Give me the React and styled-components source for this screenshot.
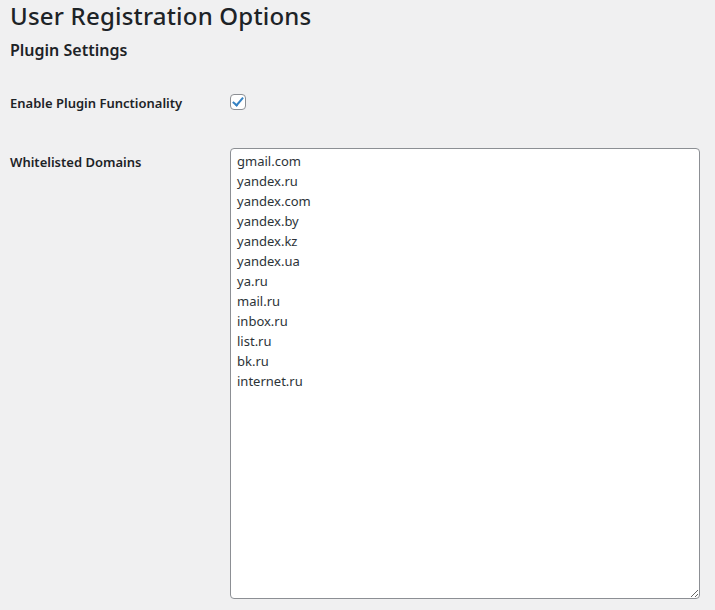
import React from "react";
import styled, { createGlobalStyle } from "styled-components";

const domains = [
  "gmail.com",
  "yandex.ru",
  "yandex.com",
  "yandex.by",
  "yandex.kz",
  "yandex.ua",
  "ya.ru",
  "mail.ru",
  "inbox.ru",
  "list.ru",
  "bk.ru",
  "internet.ru",
];

const App = () => {
  return (
    <>
      <GlobalStyle />
      <Wrap>
        <Title>User Registration Options</Title>
        <Subtitle>Plugin Settings</Subtitle>
        <Form>
          <Row>
            <Label htmlFor="enable">Enable Plugin Functionality</Label>
            <Field>
              <Checkbox id="enable" type="checkbox" defaultChecked />
            </Field>
          </Row>
          <Row>
            <Label htmlFor="domains" $offset={4}>
              Whitelisted Domains
            </Label>
            <Field>
              <Domains id="domains" defaultValue={domains.join("\n")} />
            </Field>
          </Row>
        </Form>
      </Wrap>
    </>
  );
};

export default App;

//styled-components

const GlobalStyle = createGlobalStyle`
  html, body {
    margin: 0;
    background: #f0f0f1;
    color: #1d2327;
    font-family: "Noto Sans", "Open Sans", sans-serif;
    font-size: 13px;
  }
  body {
    overflow: hidden;
  }
`;

const Wrap = styled.div`
  padding: 0 15px 0 10px;
`;

const Title = styled.h1`
  margin: 0;
  font-size: 24px;
  font-weight: 500;
  letter-spacing: 0.2px;
  line-height: 32px;
`;

const Subtitle = styled.h2`
  margin: 3px 0 0;
  font-size: 16px;
  font-weight: 600;
  line-height: 30px;
`;

const Form = styled.div`
  margin-top: 22px;
  display: flex;
  flex-direction: column;
  gap: 35px;
`;

const Row = styled.div`
  display: flex;
  align-items: flex-start;
`;

const Label = styled.label`
  width: 220px;
  flex-shrink: 0;
  font-size: 13px;
  font-weight: 600;
  line-height: 20px;
  padding-top: ${(props) => props.$offset ?? 6}px;
`;

const Field = styled.div`
  flex: 1;
  padding-top: 7px;
`;

const Checkbox = styled.input`
  appearance: none;
  margin: 0;
  width: 16px;
  height: 16px;
  border: 1px solid #8c8f94;
  border-radius: 4px;
  background: #fff;
  box-sizing: border-box;
  position: relative;
  display: block;

  &:checked::before {
    content: "";
    position: absolute;
    left: 4px;
    top: 0px;
    width: 4px;
    height: 9px;
    border: solid #3582c4;
    border-width: 0 2.5px 2.5px 0;
    transform: rotate(40deg);
  }
`;

const Domains = styled.textarea`
  display: block;
  box-sizing: border-box;
  width: 470px;
  height: 451px;
  margin-top: -7px;
  padding: 2px 6px;
  border: 1px solid #8c8f94;
  border-radius: 4px;
  background: #fff;
  color: #2c3338;
  font-family: "Noto Sans", "Open Sans", sans-serif;
  font-size: 13px;
  line-height: 20px;
  resize: both;
  outline: none;
`;
